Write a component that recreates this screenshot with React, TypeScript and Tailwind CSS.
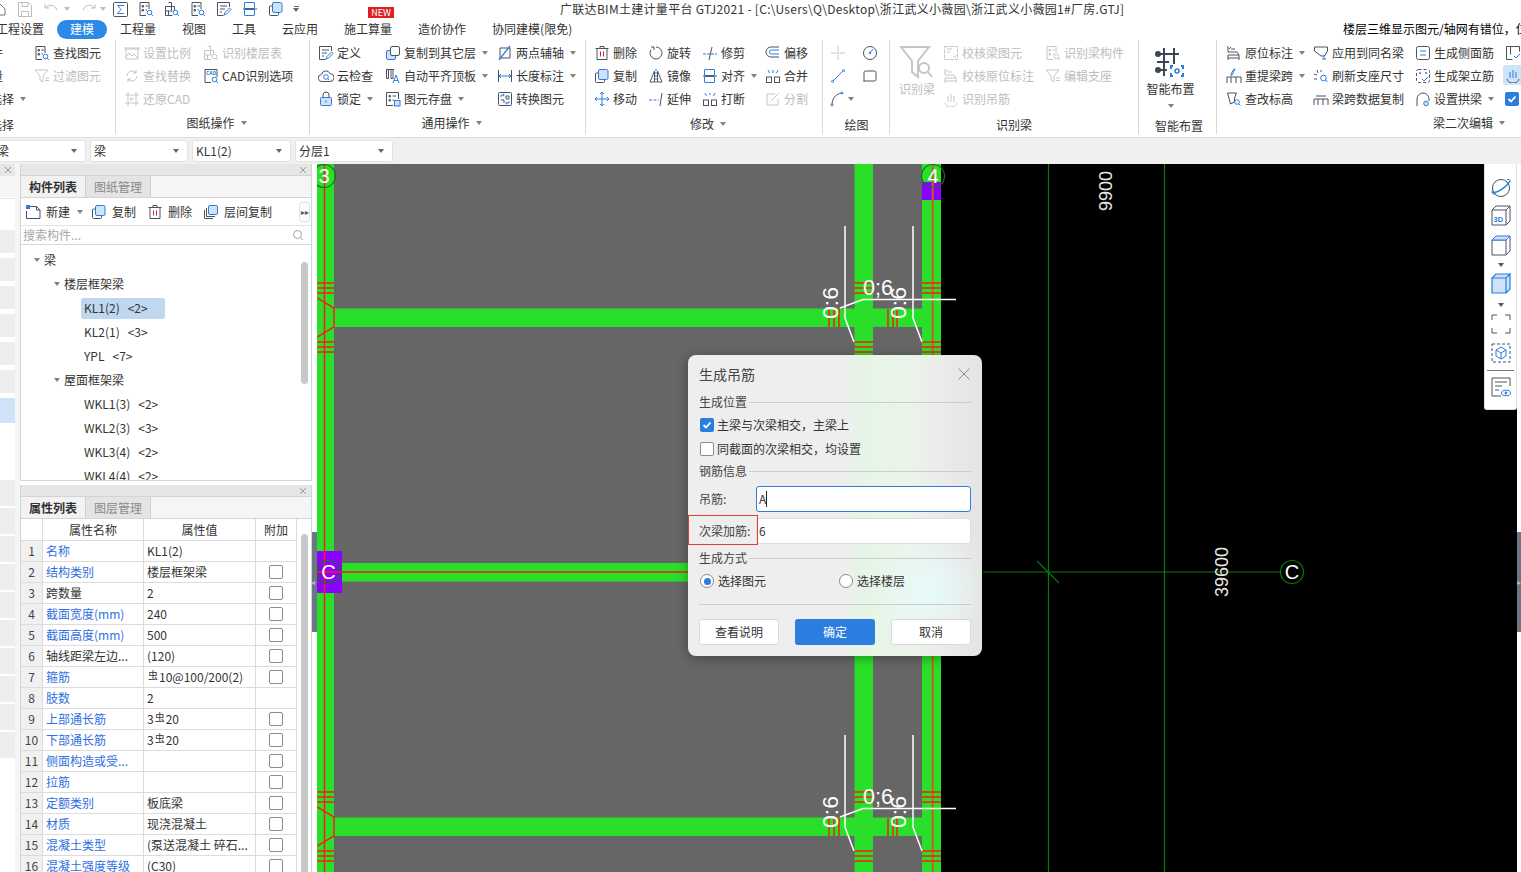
import type { ReactNode } from 'react';

const BLUE = '#2b7de0';
const OFF = '#c6c6c6';

const icons: Record<string, (b: string) => ReactNode> = {
  find: (b) => <><path d="M11 8V1.5H2v13h6" /><path d="M4 4.5h1.5V6H4zM4 8.5h1.5V10H4zM7.5 5H10M7.5 9H9" /><circle cx="11.5" cy="11.5" r="2.3" stroke={b} /><path d="M13.3 13.3 15 15" stroke={b} /></>,
  newDoc: (b) => <><path d="M5 2.500h6.500L15 6v8.500H1.500V7" /><path d="M11.500 2.500V6H15" /><rect x="1" y="1" width="4" height="4" fill={b} stroke="none" /></>,
  layers: (b) => <><path d="M1.500 6v8.500H10M3.500 4v8.500H12" /><rect x="5.500" y="1.500" width="9" height="9" rx="1.500" fill="#cfe3f8" stroke={b} /></>,
  filter: (b) => <><path d="M1 2h13L9 8v6l-3-2V8z" stroke={b} /><path d="M11 10h4M11 12.5h4" /></>,
  scale: () => <><path d="M2 4h12v10H2zM1 2v3M15 2v3M1 3h14" /><path d="M2 12l3-4 3 3 2-2 4 4" /></>,
  floor: (b) => <><path d="M1.5 5.5h9v4M1.5 5.5v9h7M4.5 1.5h3v8M1.5 10h7M4.5 10v4" /><circle cx="11.5" cy="11.5" r="2.3" stroke={b} /><path d="M13.3 13.3 15 15" stroke={b} /></>,
  replace: (b) => <><path d="M3 8a5 5 0 0 1 8-4l1 1M13 8a5 5 0 0 1-8 4l-1-1" /><path d="M12 2v3H9M4 14v-3h3" stroke={b} /></>,
  cad: (b) => <><path d="M8 14.5H2v-13h12V9" /><text x="3" y="7" fontSize="5" fontWeight="700" fill={b} stroke="none">CAD</text><circle cx="11.5" cy="11.5" r="2.3" stroke={b} /><path d="M13.3 13.3 15 15" stroke={b} /></>,
  restore: (b) => <><path d="M4 1v14M12 1v14M1 4h14M1 12h14" /><path d="M10 8H6l2-2M6 8l2 2" stroke={b} /></>,
  define: (b) => <><path d="M13.5 6V1.5h-12v13h6" /><path d="M4 5h7M4 8h5M4 11h2" /><path d="M8 14l1-2.500 4.500-4.500 1.500 1.500-4.500 4.500z" stroke={b} /></>,
  cloud: (b) => <><path d="M4 13.500a3.500 3.500 0 0 1-.5-7A4.500 4.500 0 0 1 12 5.500a4 4 0 0 1 0 8z" /><circle cx="8" cy="9" r="2.300" stroke={b} /><path d="M9.800 10.800 11 12" stroke={b} /></>,
  lock: (b) => <><rect x="2.500" y="6.500" width="11" height="8" rx="1" fill="#cfe3f8" stroke={b} /><path d="M5 6.500V4a3 3 0 0 1 6 0v2.500" /><path d="M8 9.500v2" /></>,
  copyTo: (b) => <><rect x="1.500" y="5.500" width="9" height="9" rx="1.500" fill="#cfe3f8" stroke={b} /><rect x="5.500" y="1.500" width="9" height="9" rx="1.500" fill="#fff" /></>,
  align2: (b) => <><path d="M1.500 1.500v9h2v-9zM6 1.500v9h2v-9zM1 1.500h8" /><path d="M8 15l3-8 3 8M9.200 12.500h3.600" stroke={b} /></>,
  save: (b) => <><path d="M8 14.500H1.500v-13h12V8" /><path d="M4 4.500h1.500V6H4zM4 8.500h1.500V10H4zM7.500 5H11M7.500 9H9" /><rect x="9.500" y="9.500" width="5.500" height="5.500" fill="#cfe3f8" stroke={b} /></>,
  twoPt: (b) => <><path d="M3 3h10v10H3z" /><path d="M2 15 13 1" stroke={b} strokeWidth="1.300" /></>,
  dim: (b) => <><path d="M1.500 2v12M14.500 2v12" /><path d="M2 8h12M4 6 2 8l2 2M12 6l2 2-2 2" stroke={b} /></>,
  convert: (b) => <><rect x="1.500" y="1.500" width="13" height="13" rx="1" /><path d="M4 6V4h3M6 2.800 7.300 4 6 5.200M12 10v2H9M10 10.800 8.700 12 10 13.200" stroke={b} /><path d="M9 5h3v3H9zM4 9h3v3" /></>,
  del: () => <><path d="M3 4v10.500h10V4M1.500 3.500h13M6 3.500V1.500h4v2" /><path d="M6.500 6.500v5M9.500 6.500v5" stroke="#e02020" /></>,
  rotate: () => <><path d="M8 2a6 6 0 1 1-5 2.700" /><path d="M3 2h3v3" /></>,
  trim: (b) => <><path d="M1 9h14" stroke={b} strokeDasharray="3 1" /><path d="M10 2 7 15" /></>,
  offset: (b) => <><path d="M14 2H6a5 5 0 0 0 0 10h8" /><path d="M14 5H6.500a2 2 0 0 0 0 4H14" stroke={b} /></>,
  copy: (b) => <><rect x="1.500" y="5" width="9" height="9.500" rx="1" /><rect x="4.500" y="1.500" width="9.500" height="10" rx="1.500" fill="#cfe3f8" stroke={b} /></>,
  mirror: (b) => <><path d="M6.500 3 2 14h4.500z" /><path d="M9.500 3l4.500 11H9.500z" /><path d="M8 1v14" stroke={b} strokeDasharray="2 1" /></>,
  align: (b) => <><rect x="2.500" y="1.500" width="10" height="6" rx=".5" stroke={b} /><rect x="2.500" y="8.500" width="10" height="6" rx=".5" stroke={b} /><path d="M1 8h14" /></>,
  merge: (b) => <><rect x="1.500" y="9" width="5" height="5.500" /><rect x="9.500" y="9" width="5" height="5.500" /><path d="M3 2l1.500 3M13 2l-1.500 3M8 2v3" stroke={b} /></>,
  move: (b) => <><path d="M8 1v14M1 8h14M6 3l2-2 2 2M6 13l2 2 2-2M3 6 1 8l2 2M13 6l2 2-2 2" stroke={b} /></>,
  extend: (b) => <><path d="M1 9h10" stroke={b} strokeDasharray="3 1.500" /><path d="M14 2l-2 13" /></>,
  brk: (b) => <><rect x="1.500" y="9" width="5" height="5.500" /><rect x="9.500" y="9" width="5" height="5.500" /><path d="M3 2l1.500 3M13 2l-1.500 3" stroke={b} /><path d="M7 3h2" stroke={b} /></>,
  split: () => <><path d="M10 3H2v11h11V8" /><path d="M6 10l8-8" /></>,
  point: () => <><path d="M8 1v5M8 10v5M1 8h5M10 8h5" /><circle cx="8" cy="8" r=".8" /></>,
  circle: (b) => <><circle cx="8" cy="8" r="6.500" /><path d="M8 8l3-4" stroke={b} /><circle cx="8" cy="8" r=".8" fill={b} stroke={b} /></>,
  line: (b) => <><path d="M3 13 13 3" stroke={b} /><circle cx="2.500" cy="13.500" r="1" stroke={b} /><circle cx="13.500" cy="2.500" r="1" stroke={b} /></>,
  rect: (b) => <><rect x="2" y="3" width="12" height="10" rx="1.500" stroke="#4a5260" /><circle cx="2" cy="13" r=".5" stroke={b} /></>,
  arc: (b) => <><path d="M2 14C2 8 5 3 12 2" /><circle cx="2" cy="14" r="1" stroke={b} /><circle cx="12" cy="2" r="1" stroke={b} /></>,
  check: () => <><path d="M1.500 1.500h13v13h-13z" strokeDasharray="4 1" /><path d="M4 4h5M4 7h3M10 11l1.500 1.500L15 9" /></>,
  origin: () => <><path d="M2 1v6h9l2 3H2v5M13 10v5M2 13h11" /><path d="M5 4h4M5 2l-2 2" /></>,
  applySame: (b) => <><path d="M1.500 2h13v4l-3 5H8L1.500 6z" /><path d="M11 10v4M9 14h4" stroke={b} /></>,
  side: (b) => <><rect x="1.500" y="1.500" width="13" height="13" rx="2" /><path d="M5 6h6M5 10h6" stroke={b} /></>,
  stand: (b) => <><rect x="1.500" y="1.500" width="13" height="13" rx="2" strokeDasharray="3 2" /><circle cx="5" cy="5" r=".7" stroke={b} /><circle cx="11" cy="5" r=".7" stroke={b} /><path d="M7 11l2 2 4-4" stroke={b} /></>,
  span: (b) => <><path d="M1 15V9h14v6M5 9v6M10 9v6" /><path d="M9 1 6 7l-1 .500L5 6l3-5z" stroke={b} /></>,
  refresh: (b) => <><path d="M4 2l1 3M1 6l3 1M8 2v2M1 11h3" /><circle cx="10.500" cy="10" r="2.800" stroke={b} /><path d="M12.500 12l2 2" stroke={b} /></>,
  level: (b) => <><path d="M1.500 2h9l-2 5v4l-4 2z" /><circle cx="11" cy="11" r="2.300" stroke={b} /><path d="M12.800 12.800 14.500 14.500" stroke={b} /></>,
  spanCopy: () => <><path d="M1 14V8h14v6M5 8v6M10 8v6M3 5h10" /></>,
  arch: (b) => <><path d="M2 15V8a6 6 0 0 1 12 0v2" /><circle cx="11" cy="12.500" r="2.300" fill="#cfe3f8" stroke={b} /></>,
  colEdit: (b) => <><path d="M1.500 1.500h13v5M1.500 1.500v13h6M5.500 1.500v8" /><path d="M9 11l2 2 4-4" stroke={b} /></>,
  hook: (b) => <><path d="M2 12a6 4 0 0 0 12 0" /><path d="M5 5v6M8 3v8M11 5v6" stroke={b} /></>,
};

function Ic({ name, off = false }: { name: string; off?: boolean }) {
  return (
    <svg width="16" height="16" viewBox="0 0 16 16" fill="none" stroke={off ? OFF : '#4a5260'} strokeWidth="1" className="shrink-0">
      {icons[name](off ? OFF : BLUE)}
    </svg>
  );
}

function Caret({ className = 'border-t-[#808080]' }: { className?: string }) {
  return <span className={`inline-block w-0 h-0 border-x-[3px] border-t-[4px] border-x-transparent ${className}`} />;
}

function Item({ ic, t, caret, off }: { ic: string; t?: string; caret?: boolean; off?: boolean }) {
  return (
    <div className={`flex items-center h-[23px] whitespace-nowrap ${off ? 'text-[#bdbdbd]' : 'text-[#333]'}`}>
      <Ic name={ic} off={off} />
      {t && <span className="ml-[3px]">{t}</span>}
      {caret && <span className="ml-[6px] flex"><Caret /></span>}
    </div>
  );
}

function GroupLabel({ t, className = 'pb-[2px]', caret = true }: { t: string; className?: string; caret?: boolean }) {
  return (
    <div className={`mt-auto flex items-center justify-center gap-[6px] text-[#333] ${className}`}>
      {t}
      {caret && <Caret />}
    </div>
  );
}

function Ribbon() {
  return (
    <div className="flex h-[98px] shrink-0 border-b border-[#dcdcdc] bg-white text-[12px] overflow-hidden">
      <div className="w-[116px] shrink-0 flex flex-col h-[94px] border-r border-[#d8d8d8] overflow-hidden">
        <div className="grid grid-cols-[34px_1fr] pt-[1px]">
          <div className="h-[23px] flex items-center justify-end pr-[31px] whitespace-nowrap text-[#333]">构件</div>
          <Item ic="find" t="查找图元" />
          <div className="h-[23px] flex items-center justify-end pr-[31px] whitespace-nowrap text-[#333]">批量</div>
          <Item ic="filter" t="过滤图元" off />
          <div className="h-[23px] flex items-center justify-end pr-[8px] gap-[6px] whitespace-nowrap text-[#333]"><span>选择</span><Caret /></div>
        </div>
        <div className="mt-auto flex justify-start ml-[-10px] text-[#333]">选择</div>
      </div>

      <div className="w-[194px] shrink-0 flex flex-col h-[94px] pl-[8px] border-r border-[#d8d8d8]">
        <div className="grid grid-cols-[79px_1fr] pt-[1px]">
          <Item ic="scale" t="设置比例" off />
          <Item ic="floor" t="识别楼层表" off />
          <Item ic="replace" t="查找替换" off />
          <Item ic="cad" t="CAD识别选项" />
          <Item ic="restore" t="还原CAD" off />
        </div>
        <GroupLabel t="图纸操作" />
      </div>

      <div className="w-[276px] shrink-0 flex flex-col h-[94px] pl-[8px] border-r border-[#d8d8d8]">
        <div className="grid grid-cols-[67px_112px_1fr] pt-[1px]">
          <Item ic="define" t="定义" />
          <Item ic="copyTo" t="复制到其它层" caret />
          <Item ic="twoPt" t="两点辅轴" caret />
          <Item ic="cloud" t="云检查" />
          <Item ic="align2" t="自动平齐顶板" caret />
          <Item ic="dim" t="长度标注" caret />
          <Item ic="lock" t="锁定" caret />
          <Item ic="save" t="图元存盘" caret />
          <Item ic="convert" t="转换图元" />
        </div>
        <GroupLabel t="通用操作" />
      </div>

      <div className="w-[237px] shrink-0 flex flex-col h-[94px] pl-[8px] border-r border-[#d8d8d8]">
        <div className="grid grid-cols-[54px_54px_63px_1fr] pt-[1px]">
          <Item ic="del" t="删除" />
          <Item ic="rotate" t="旋转" />
          <Item ic="trim" t="修剪" />
          <Item ic="offset" t="偏移" />
          <Item ic="copy" t="复制" />
          <Item ic="mirror" t="镜像" />
          <Item ic="align" t="对齐" caret />
          <Item ic="merge" t="合并" />
          <Item ic="move" t="移动" />
          <Item ic="extend" t="延伸" />
          <Item ic="brk" t="打断" />
          <Item ic="split" t="分割" off />
        </div>
        <GroupLabel t="修改" className="pb-[1px]" />
      </div>

      <div className="w-[67px] shrink-0 flex flex-col h-[94px] pl-[7px] border-r border-[#d8d8d8]">
        <div className="grid grid-cols-[32px_1fr] pt-[1px]">
          <Item ic="point" off />
          <Item ic="circle" />
          <Item ic="line" />
          <Item ic="rect" />
          <div className="flex items-center h-[23px]"><Ic name="arc" /><span className="ml-[2px] flex"><Caret /></span></div>
        </div>
        <GroupLabel t="绘图" caret={false} className="pr-[6px]" />
      </div>

      <div className="w-[249px] shrink-0 flex flex-col h-[94px] border-r border-[#d8d8d8]">
        <div className="flex pt-[1px]">
          <div className="w-[53px] pl-[9px] shrink-0 flex flex-col items-start">
            <svg width="34" height="36" viewBox="0 0 34 36" fill="none" stroke={OFF} strokeWidth="2" className="mt-[3px]">
              <path d="M2 3h28L19 17v16l-6-5V17z" />
              <circle cx="25" cy="24" r="5" />
              <path d="m29 28 4 5" />
            </svg>
            <span className="text-[#bdbdbd]">识别梁</span>
          </div>
          <div className="grid grid-cols-[102px_1fr]">
            <Item ic="check" t="校核梁图元" off />
            <Item ic="find" t="识别梁构件" off />
            <Item ic="origin" t="校核原位标注" off />
            <Item ic="filter" t="编辑支座" off />
            <Item ic="hook" t="识别吊筋" off />
          </div>
        </div>
        <GroupLabel t="识别梁" caret={false} className="" />
      </div>

      <div className="w-[78px] shrink-0 flex flex-col h-[94px] items-center border-r border-[#d8d8d8]">
        <svg width="32" height="32" viewBox="0 0 32 32" fill="none" stroke="#3d4654" strokeWidth="2" className="mt-[6px] ml-[-14px]">
          <path d="M9 2v28M19 2v16M2 8h22M2 16h12M2 24h10" />
          <circle cx="3" cy="8" r="2" /><circle cx="3" cy="24" r="2" />
          <path d="M18 20h-2v3M26 20h2v3M18 30h-2v-3M26 30h2v-3" stroke={BLUE} />
          <circle cx="22" cy="25" r="2" stroke={BLUE} strokeWidth="1.500" />
        </svg>
        <span className="text-[#333] mt-[2px] ml-[-14px]">智能布置</span>
        <span className="mt-[6px] ml-[-14px] flex"><Caret /></span>
        <GroupLabel t="智能布置" caret={false} className="ml-[3px] mb-[-1px]" />
      </div>

      <div className="flex-1 flex flex-col h-[94px] pl-[9px] overflow-hidden">
        <div className="grid grid-cols-[87px_102px_90px_20px] pt-[1px]">
          <Item ic="origin" t="原位标注" caret />
          <Item ic="applySame" t="应用到同名梁" />
          <Item ic="side" t="生成侧面筋" />
          <Item ic="colEdit" />
          <Item ic="span" t="重提梁跨" caret />
          <Item ic="refresh" t="刷新支座尺寸" />
          <Item ic="stand" t="生成架立筋" />
          <div className="h-[20px] mt-[1px] ml-[-2px] flex items-center pl-[2px] bg-[#cfe3f8] rounded-l-[2px]"><Ic name="hook" /></div>
          <Item ic="level" t="查改标高" />
          <Item ic="spanCopy" t="梁跨数据复制" />
          <Item ic="arch" t="设置拱梁" caret />
          <div className="h-[23px] flex items-center">
            <span className="w-[14px] h-[14px] rounded-[2px] bg-[#2b7de0] flex items-center justify-center">
              <svg width="10" height="10" viewBox="0 0 10 10" fill="none" stroke="#fff" strokeWidth="1.800"><path d="m1.500 5 2.500 2.500 4.500-5" /></svg>
            </span>
          </div>
        </div>
        <GroupLabel t="梁二次编辑" className="pb-[2px] !justify-end pr-[16px]" />
      </div>
    </div>
  );
}

function Combo({ t, w }: { t: string; w: string }) {
  return (
    <div className={`${w} h-[22px] bg-white rounded-[3px] border border-[#e3e3e3] flex items-center justify-between pl-[3px] pr-[8px] text-[12px] text-[#333] shrink-0 overflow-hidden`}>
      <span>{t}</span>
      <Caret className="border-t-[#666]" />
    </div>
  );
}

function PanelHead() {
  return (
    <div className="h-[12px] shrink-0 bg-[#e6e6e6] flex items-center justify-end pr-[4px] border-b border-[#d4d4d4]">
      <svg width="8" height="8" viewBox="0 0 8 8" stroke="#9a9a9a" strokeWidth="1"><path d="m1 1 6 6M7 1 1 7" /></svg>
    </div>
  );
}

function Tabs({ a, b }: { a: string; b: string }) {
  return (
    <div className="h-[22px] shrink-0 flex bg-[#f5f5f5] border-b border-[#d4d4d4] text-[12px]">
      <div className="w-[65px] flex items-center justify-center font-bold text-[#333] bg-[#f2f2f2] border-r border-[#cfcfcf]">{a}</div>
      <div className="w-[65px] flex items-center justify-center text-[#8a8a8a] bg-[#e4e4e4] border-r border-[#cfcfcf]">{b}</div>
    </div>
  );
}

function ComponentPanel() {
  const leaves = [['KL1(2)', '<2>'], ['KL2(1)', '<3>'], ['YPL', '<7>']];
  const roof = [['WKL1(3)', '<2>'], ['WKL2(3)', '<3>'], ['WKL3(4)', '<2>'], ['WKL4(4)', '<2>']];
  return (
    <div className="h-[317px] flex flex-col border-x border-b border-[#d4d4d4] bg-white text-[12px] text-[#333] shrink-0">
      <PanelHead />
      <Tabs a="构件列表" b="图纸管理" />
      <div className="h-[28px] shrink-0 flex items-center pl-[4px] pt-[1px] border-b border-[#e4e4e4] relative">
        <Ic name="newDoc" />
        <span className="ml-[5px]">新建</span>
        <span className="ml-[7px] mr-[8px] flex"><Caret /></span>
        <Ic name="copy" />
        <span className="ml-[5px]">复制</span>
        <span className="w-[11px]" />
        <Ic name="del" />
        <span className="ml-[5px]">删除</span>
        <span className="w-[11px]" />
        <Ic name="layers" />
        <span className="ml-[5px]">层间复制</span>
        <div className="absolute right-[1px] top-[4px] w-[11px] h-[20px] rounded-[3px] border border-[#e0e0e0] flex items-center justify-center text-[8px] text-[#555]">▸▸</div>
      </div>
      <div className="h-[19px] flex items-center justify-between pl-[2px] pr-[7px] border-b border-[#d8d8d8] text-[#a8a8a8] shrink-0">
        <span>搜索构件...</span>
        <svg width="12" height="12" viewBox="0 0 12 12" fill="none" stroke="#a0a0a0"><circle cx="5.500" cy="5.500" r="4" /><path d="m8.500 8.500 2.500 2.500" /></svg>
      </div>
      <div className="flex-1 relative overflow-hidden pt-[3px]">
        <div className="h-[24px] flex items-center pl-[13px] gap-[4px]"><Caret /><span>梁</span></div>
        <div className="h-[24px] flex items-center pl-[33px] gap-[4px]"><Caret /><span>楼层框架梁</span></div>
        {leaves.map(([n, c], i) => (
          <div key={n} className="h-[24px] flex items-center pl-[60px]">
            <div className={`h-[21px] flex items-center px-[3px] rounded-[2px] gap-[8px] ${i === 0 ? 'bg-[#bfd8f0] w-[84px]' : ''}`}>
              <span>{n}</span><span>{c}</span>
            </div>
          </div>
        ))}
        <div className="h-[24px] flex items-center pl-[33px] gap-[4px]"><Caret /><span>屋面框架梁</span></div>
        {roof.map(([n, c]) => (
          <div key={n} className="h-[24px] flex items-center pl-[63px] gap-[8px]"><span>{n}</span><span>{c}</span></div>
        ))}
        <div className="absolute left-[280px] top-[17px] w-[7px] h-[122px] rounded-full bg-[#c8c8c8]" />
      </div>
    </div>
  );
}

const Rebar = () => <span className="text-[10px] relative top-[-3px] mx-[1px]">虫</span>;

const rows: { n: string; v: ReactNode; blue: boolean; box: boolean }[] = [
  { n: '名称', v: 'KL1(2)', blue: true, box: false },
  { n: '结构类别', v: '楼层框架梁', blue: true, box: true },
  { n: '跨数量', v: '2', blue: false, box: true },
  { n: '截面宽度(mm)', v: '240', blue: true, box: true },
  { n: '截面高度(mm)', v: '500', blue: true, box: true },
  { n: '轴线距梁左边...', v: '(120)', blue: false, box: true },
  { n: '箍筋', v: <><Rebar />10@100/200(2)</>, blue: true, box: true },
  { n: '肢数', v: '2', blue: true, box: false },
  { n: '上部通长筋', v: <>3<Rebar />20</>, blue: true, box: true },
  { n: '下部通长筋', v: <>3<Rebar />20</>, blue: true, box: true },
  { n: '侧面构造或受...', v: '', blue: true, box: true },
  { n: '拉筋', v: '', blue: true, box: true },
  { n: '定额类别', v: '板底梁', blue: true, box: true },
  { n: '材质', v: '现浇混凝土', blue: true, box: true },
  { n: '混凝土类型', v: '(泵送混凝土 碎石...', blue: true, box: true },
  { n: '混凝土强度等级', v: '(C30)', blue: true, box: true },
];

function PropertyPanel() {
  return (
    <div className="flex-1 min-h-0 flex flex-col border-x border-[#d4d4d4] bg-white text-[12px] text-[#333] overflow-hidden relative mt-[4px]">
      <PanelHead />
      <Tabs a="属性列表" b="图层管理" />
      <div className="flex h-[22px] w-[276px] border-b border-[#dcdcdc] shrink-0">
        <div className="w-[22px] border-r border-[#dcdcdc]" />
        <div className="w-[101px] border-r border-[#dcdcdc] flex items-center justify-center">属性名称</div>
        <div className="w-[112px] border-r border-[#dcdcdc] flex items-center justify-center">属性值</div>
        <div className="w-[41px] border-r border-[#dcdcdc] flex items-center justify-center">附加</div>
      </div>
      {rows.map((r, i) => (
        <div key={r.n} className="flex h-[21px] w-[276px] border-b border-[#dcdcdc] shrink-0">
          <div className="w-[22px] bg-[#f0f0f0] border-r border-[#dcdcdc] flex items-center justify-center text-[#444]">{i + 1}</div>
          <div className={`w-[101px] border-r border-[#dcdcdc] flex items-center pl-[3px] whitespace-nowrap overflow-hidden ${r.blue ? 'text-[#2f6fe0]' : ''}`}>{r.n}</div>
          <div className="w-[112px] border-r border-[#dcdcdc] flex items-center pl-[3px] whitespace-nowrap overflow-hidden">{r.v}</div>
          <div className="w-[41px] border-r border-[#dcdcdc] flex items-center justify-center">
            {r.box && <span className="w-[14px] h-[14px] rounded-[2px] border border-[#8c8c8c]" />}
          </div>
        </div>
      ))}
      <div className="absolute left-[280px] top-[49px] w-[7px] h-[420px] rounded-full bg-[#c8c8c8]" />
    </div>
  );
}

function BeamDetail({ dy }: { dy: number }) {
  const hTicks = [829, 834, 839, 888, 893, 897];
  return (
    <g transform={`translate(0 ${dy})`}>
      {[283, 288, 293, 342, 347, 352].map((y) => (
        <g key={y} stroke="#ff1a1a" strokeWidth="1.500">
          <path d={`M317 ${y}h17M854 ${y}h19M922 ${y}h19`} />
        </g>
      ))}
      <path d="M317 298 334 308V327L317 337" fill="none" stroke="#ff1a1a" strokeWidth="1.500" />
      {hTicks.map((x) => <path key={x} d={`M${x} 309v18`} stroke="#ff1a1a" strokeWidth="1.500" />)}
      <g fill="none" stroke="#fff" strokeWidth="1.500">
        <path d="M845 226V318L854 342M913 226V318L922 342M840 308 863 299.500H956" />
      </g>
      <g fill="#fff" fontFamily="'Liberation Sans',sans-serif" fontSize="22">
        <text x="863" y="295" textLength="30" lengthAdjust="spacingAndGlyphs">0;6</text>
        <text transform="translate(838 319) rotate(-90)" textLength="32" lengthAdjust="spacingAndGlyphs">0:6</text>
        <text transform="translate(906 319) rotate(-90)" textLength="32" lengthAdjust="spacingAndGlyphs">0:6</text>
      </g>
    </g>
  );
}

function Axis({ x, y, t }: { x: number; y: number; t: string }) {
  return (
    <g>
      <circle cx={x} cy={y} r="11.500" fill="none" stroke="#0a7a0a" strokeWidth="1.200" />
      <text x={x} y={y + 7} textAnchor="middle" fill="#fff" fontSize="20" fontFamily="'Liberation Sans',sans-serif">{t}</text>
    </g>
  );
}

function Drawing() {
  return (
    <svg width="1200" height="708" viewBox="317 164 1200 708" className="block">
      <rect x="317" y="164" width="624" height="708" fill="#666" />
      <rect x="941" y="164" width="576" height="708" fill="#000" />
      <g fill="#2adf2a">
        <rect x="317" y="164" width="17" height="708" />
        <rect x="854.500" y="164" width="18.500" height="708" />
        <rect x="922" y="164" width="19" height="708" />
        <rect x="334" y="308.500" width="521" height="18.500" />
        <rect x="873" y="308.500" width="49" height="18.500" />
        <rect x="334" y="817.500" width="521" height="18.500" />
        <rect x="873" y="817.500" width="49" height="18.500" />
        <rect x="342" y="563" width="360" height="18.500" />
      </g>
      <path d="M324.500 164V872" stroke="#ff1a1a" strokeWidth="1.500" />
      <path d="M932.700 164V872" stroke="#c4621e" strokeWidth="2" />
      <BeamDetail dy={0} />
      <BeamDetail dy={509} />
      <rect x="922" y="182" width="19" height="18" fill="#8b00ff" />
      <path d="M932.700 182V200" stroke="#c4621e" strokeWidth="2" />
      <rect x="317" y="551" width="25" height="42" fill="#8b00ff" />
      <path d="M324.500 551V593" stroke="#ff1a1a" strokeWidth="1.500" />
      <path d="M317 572H702" stroke="#ff1a1a" strokeWidth="1.500" />
      <g stroke="#0a7a0a" strokeWidth="1.200" fill="none">
        <path d="M1048.500 164V872M1164.500 164V872M983 572H1280M1037 561 1059 583" />
      </g>
      <Axis x={324} y={176} t="3" />
      <Axis x={933} y={176} t="4" />
      <Axis x={328.500} y={572} t="C" />
      <Axis x={1292} y={572} t="C" />
      <g fill="#e8e8e8" fontSize="18" fontFamily="'Liberation Sans',sans-serif" textAnchor="middle">
        <text transform="translate(1112 191) rotate(-90)">9900</text>
        <text transform="translate(1228 572) rotate(-90)">39600</text>
      </g>
    </svg>
  );
}

function Section({ t }: { t: string }) {
  return (
    <div className="h-[18px] flex items-center gap-[2px] text-[#444]">
      <span>{t}</span>
      <span className="flex-1 h-px bg-[#cccccc]" />
    </div>
  );
}

function Dialog() {
  return (
    <div className="absolute left-[371px] top-[191px] w-[294px] h-[301px] px-[11px] pt-[9px] rounded-[8px] text-[12px] text-[#333] bg-[radial-gradient(circle_at_82%_78%,#e6fbfa_0,rgba(230,251,250,0)_17%),linear-gradient(90deg,#eeeeee_52%,#e6f5e6_60%,#ebf4ea_75%,#eaeaea_88%,#e4e4e4_100%)] shadow-[0_2px_12px_rgba(0,0,0,0.35)]">
      <div className="h-[20px] flex items-center justify-between pr-[1px]">
        <span className="text-[14px] text-[#444]">生成吊筋</span>
        <svg width="12" height="12" viewBox="0 0 12 12" stroke="#8a8a8a" strokeWidth="1"><path d="m.5.500 11 11M11.500.500l-11 11" /></svg>
      </div>
      <div className="mt-[9px]"><Section t="生成位置" /></div>
      <div className="mt-[2px] h-[24px] flex items-center pl-[1px] gap-[3px]">
        <span className="w-[14px] h-[14px] rounded-[2px] bg-[#2b7de0] flex items-center justify-center">
          <svg width="10" height="10" viewBox="0 0 10 10" fill="none" stroke="#fff" strokeWidth="1.800"><path d="m1.500 5 2.500 2.500 4.500-5" /></svg>
        </span>
        主梁与次梁相交，主梁上
      </div>
      <div className="h-[24px] flex items-center pl-[1px] gap-[3px]">
        <span className="w-[14px] h-[14px] rounded-[2px] border border-[#8c8c8c] bg-white" />
        同截面的次梁相交，均设置
      </div>
      <div className="mt-[1px]"><Section t="钢筋信息" /></div>
      <div className="mt-[6px] h-[26px] flex items-center">
        <span className="w-[57px] text-[#444]">吊筋:</span>
        <div className="flex-1 h-full bg-white rounded-[3px] border border-[#2b7de0] flex items-center pl-[2px]">
          A<span className="w-px h-[16px] bg-[#222]" />
        </div>
      </div>
      <div className="mt-[6px] h-[26px] flex items-center">
        <span className="w-[57px] text-[#444] whitespace-nowrap">次梁加筋:</span>
        <div className="flex-1 h-full bg-white rounded-[3px] border border-[#dedede] flex items-center pl-[2px]">6</div>
      </div>
      <div className="mt-[5px]"><Section t="生成方式" /></div>
      <div className="mt-[2px] h-[24px] flex items-center pl-[1px]">
        <span className="w-[14px] h-[14px] rounded-full border border-[#8c8c8c] bg-white flex items-center justify-center">
          <span className="w-[7px] h-[7px] rounded-full bg-[#2b7de0]" />
        </span>
        <span className="ml-[4px] w-[121px]">选择图元</span>
        <span className="w-[14px] h-[14px] rounded-full border border-[#8c8c8c] bg-white" />
        <span className="ml-[4px]">选择楼层</span>
      </div>
      <div className="mt-[11px] h-px bg-[#cccccc]" />
      <div className="mt-[14px] flex justify-between">
        <button className="w-[80px] h-[26px] bg-white rounded-[3px] border border-[#dadada]">查看说明</button>
        <button className="w-[80px] h-[26px] bg-[#2b7de0] rounded-[3px] text-white">确定</button>
        <button className="w-[80px] h-[26px] bg-white rounded-[3px] border border-[#dadada]">取消</button>
      </div>
      <div className="absolute left-0 top-[160px] w-[70px] h-[30px] border border-[#e53935]" />
    </div>
  );
}

function ViewBar() {
  return (
    <div className="absolute right-0 top-0 w-[33px] h-[246px] bg-white rounded-b-[3px] border-x border-b border-[#e0e0e0] flex flex-col items-center pt-[13px]">
      <svg width="22" height="22" viewBox="0 0 22 22" fill="none" stroke="#4a5260" className="shrink-0"><circle cx="11" cy="11" r="8.500" /><path d="M2 15C6 17 16 11 20 4" stroke={BLUE} strokeWidth="1.400" /><path d="M3 12C1 16 3 18 6 17M20 4c1-1-1-2-3-1.500" stroke={BLUE} /></svg>
      <svg width="20" height="22" viewBox="0 0 20 22" fill="none" stroke="#4a5260" className="mt-[6px] shrink-0"><path d="M1 5h14v15H1zM1 5l4-4h14v15l-4 4M15 5l4-4" /><text x="2.500" y="17" fontSize="7.500" fontWeight="700" fill={BLUE} stroke="none" fontFamily="'Liberation Sans',sans-serif">3D</text></svg>
      <svg width="20" height="22" viewBox="0 0 20 22" fill="none" stroke="#4a5260" className="mt-[8px] shrink-0"><path d="M1 5h14v15H1zM15 5l4-4v15l-4 4" /><path d="M1 5l4-4h14l-4 4z" fill="#cfe3f8" stroke={BLUE} /></svg>
      <span className="mt-[6px] flex"><Caret className="border-t-[#555]" /></span>
      <svg width="20" height="22" viewBox="0 0 20 22" fill="#cfe3f8" stroke={BLUE} strokeWidth="1.200" className="mt-[6px] shrink-0"><path d="M1 5h14v15H1zM15 5l4-4v15l-4 4M1 5l4-4h14l-4 4z" /></svg>
      <span className="mt-[8px] flex"><Caret className="border-t-[#555]" /></span>
      <svg width="20" height="20" viewBox="0 0 20 20" fill="none" stroke="#4a5260" className="mt-[7px] shrink-0"><path d="M1 6V1h5M14 1h5v5M1 14v5h5M19 14v5h-5" /></svg>
      <svg width="20" height="20" viewBox="0 0 20 20" fill="none" stroke="#4a5260" className="mt-[9px] shrink-0"><path d="M1 1h18v18H1z" strokeDasharray="3 2" /><path d="M10 4l5 3v6l-5 3-5-3V7zM5 7l5 3 5-3M10 10v6" stroke={BLUE} /></svg>
      <div className="mt-[7px] w-[27px] h-px bg-[#777] shrink-0" />
      <svg width="20" height="20" viewBox="0 0 20 20" fill="none" stroke="#4a5260" className="mt-[6px] shrink-0"><path d="M19 9V1H1v18h9M4 5h12M4 9h7M4 13h4" /><ellipse cx="15" cy="16" rx="4.500" ry="2.800" stroke={BLUE} /><circle cx="15" cy="16" r="1" fill={BLUE} stroke={BLUE} /></svg>
    </div>
  );
}

function LeftStrip() {
  const n = [0, 1, 2, 3, 4, 5];
  const m = [0, 1, 2, 3, 4, 5, 6, 7, 8, 9];
  return (
    <div className="w-[15px] shrink-0 bg-white flex flex-col overflow-hidden">
      <div className="h-[12px] shrink-0 bg-[#e6e6e6] flex items-center justify-center">
        <svg width="8" height="8" viewBox="0 0 8 8" stroke="#9a9a9a"><path d="m1 1 6 6M7 1 1 7" /></svg>
      </div>
      <div className="h-[21px] shrink-0 bg-[#f5f5f5]" />
      <div className="h-[32px] shrink-0 border-t border-[#e4e4e4] mt-[1px]" />
      {n.map((i) => <div key={i} className="h-[23px] mb-[5px] bg-[#eeeeee] shrink-0" />)}
      <div className="h-[25px] shrink-0 bg-[#cfe3f8]" />
      <div className="h-[57px] shrink-0" />
      {m.map((i) => <div key={i} className="h-[26px] mb-[2px] bg-[#eeeeee] shrink-0" />)}
    </div>
  );
}

export default function App() {
  const quick = ['find', 'floor', 'find', 'define', 'align', 'copy'];
  return (
    <div className="w-[1521px] h-[872px] overflow-hidden flex flex-col relative bg-white text-[12px] font-['Noto_Sans_CJK_SC','Liberation_Sans',sans-serif]">
      <div className="h-[18px] flex items-center text-[#333] shrink-0 relative">
        <div className="flex items-center w-[560px] shrink-0">
          <svg width="6" height="14" viewBox="0 0 6 14" fill="none" stroke="#777" className="mr-[12px]"><path d="M0 2 5 7v6H0" /></svg>
          <svg width="14" height="15" viewBox="0 0 14 15" fill="none" stroke="#bdbdbd"><path d="M.5.500h10l3 3v11H.5zM3.500 9.500h7v5h-7zM4 .500v4h6v-4" /></svg>
          <svg width="14" height="12" viewBox="0 0 14 12" fill="none" stroke="#bdbdbd" className="ml-[12px]"><path d="M1 1v4h4M1.500 5C4 1 11 1 13 7" /></svg>
          <span className="ml-[6px] flex"><Caret className="border-t-[#bdbdbd]" /></span>
          <svg width="14" height="12" viewBox="0 0 14 12" fill="none" stroke="#bdbdbd" className="ml-[12px]"><path d="M13 1v4H9M12.500 5C10 1 3 1 1 7" /></svg>
          <span className="ml-[4px] flex"><Caret className="border-t-[#bdbdbd]" /></span>
          <svg width="15" height="15" viewBox="0 0 15 15" fill="none" stroke="#4a5260" className="ml-[7px]"><rect x=".5" y=".5" width="14" height="14" rx="1" /><path d="M11 3.500H4.500L8 7.500l-3.500 4H11" stroke={BLUE} /></svg>
          {quick.map((q, i) => <span key={i} className="ml-[10px] flex"><Ic name={q} /></span>)}
          <span className="ml-[9px] flex flex-col items-center gap-[1px]"><span className="w-[5px] h-px bg-[#666]" /><Caret className="border-t-[#666]" /></span>
        </div>
        <span className="whitespace-nowrap text-[12px] tracking-[0.3px]">广联达BIM土建计量平台 GTJ2021 - [C:\Users\Q\Desktop\浙江武义小薇园\浙江武义小薇园1#厂房.GTJ]</span>
      </div>

      <div className="h-[22px] flex items-center text-[#333] shrink-0 relative">
        <span className="ml-[-4px] mr-[13px]">工程设置</span>
        <span className="w-[50px] h-[19px] rounded-full bg-[#2b8ae8] text-white flex items-center justify-center mr-[13px]">建模</span>
        <span className="mr-[26px]">工程量</span>
        <span className="mr-[26px]">视图</span>
        <span className="mr-[26px]">工具</span>
        <span className="mr-[26px]">云应用</span>
        <span className="mr-[26px] relative">
          施工算量
          <span className="absolute left-[24px] top-[-13px] w-[26px] h-[11px] bg-[#e02020] text-white text-[9px] leading-[11px] text-center">NEW</span>
        </span>
        <span className="mr-[26px]">造价协作</span>
        <span>协同建模(限免)</span>
        <div className="absolute left-[1343px] top-[3px] h-[15px] w-[178px] bg-white text-black leading-[15px] whitespace-nowrap overflow-hidden">楼层三维显示图元/轴网有错位，位</div>
      </div>

      <Ribbon />

      <div className="h-[26px] bg-[#f0f0f0] flex items-center gap-[4px] shrink-0 ml-[-4px]">
        <Combo t="梁" w="w-[90px] !pl-[0px]" />
        <Combo t="梁" w="w-[98px]" />
        <Combo t="KL1(2)" w="w-[99px]" />
        <Combo t="分层1" w="w-[98px]" />
      </div>

      <div className="flex-1 min-h-0 flex bg-white">
        <LeftStrip />
        <div className="w-[5px] shrink-0 bg-[#f5f5f5]" />
        <div className="w-[292px] shrink-0 flex flex-col">
          <ComponentPanel />
          <PropertyPanel />
        </div>
        <div className="w-[5px] shrink-0 flex items-center bg-white">
          <div className="w-full h-[100px] mt-[128px] bg-[#6b7785] flex items-center"><span className="text-[8px] text-[#bbb] ml-[-1px]">◂</span></div>
        </div>
        <div className="w-[1200px] shrink-0 relative overflow-hidden">
          <Drawing />
          <Dialog />
          <ViewBar />
        </div>
        <div className="flex-1 flex items-center bg-white">
          <div className="w-full h-[100px] mt-[128px] bg-[#6b7785] flex items-center"><span className="text-[8px] text-[#bbb]">▸</span></div>
        </div>
      </div>
    </div>
  );
}
